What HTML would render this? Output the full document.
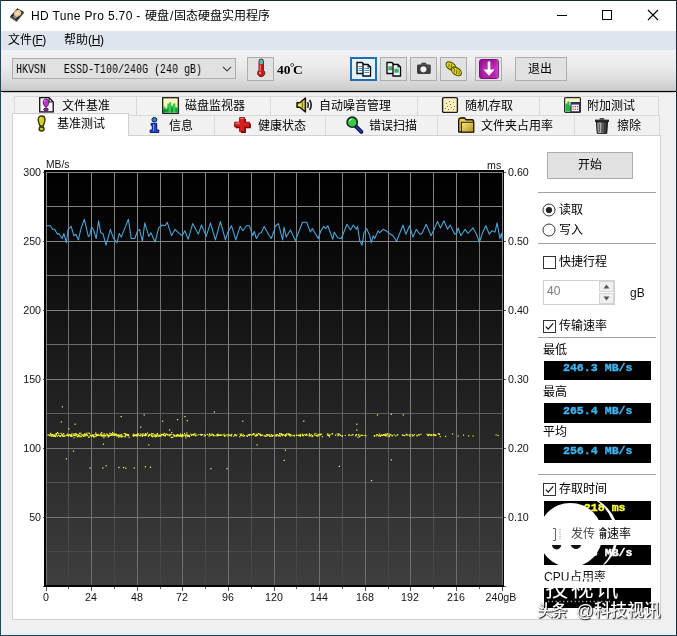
<!DOCTYPE html>
<html lang="zh-CN"><head><meta charset="utf-8"><title>HD Tune Pro 5.70</title>
<style>
html,body{margin:0;padding:0;background:#f0f0f0}
#w{position:relative;width:677px;height:636px;overflow:hidden;font-family:"Liberation Sans",sans-serif}
.b,.c,.t,.i{position:absolute;display:block}
.b{box-sizing:border-box}
.t{white-space:pre;will-change:transform}
.c{overflow:visible}
.i{overflow:visible}
u{text-decoration:underline}
</style></head><body>
<div id="w">
<div class="b" style="left:0px;top:0px;width:677px;height:636px;background:#f0f0f0"></div>
<div class="b" style="left:0px;top:0px;width:677px;height:31px;background:#fff"></div>
<div class="b" style="left:0px;top:31px;width:677px;height:19px;background:#dee5ee"></div>
<div class="b" style="left:0px;top:50px;width:677px;height:41px;background:linear-gradient(#f3f2f6 0%,#ececec 35%,#dedede 70%,#c9c9c9 100%)"></div>
<div class="b" style="left:0px;top:90px;width:677px;height:1px;background:#b4b4b4"></div>
<div class="b" style="left:0px;top:91px;width:677px;height:1px;background:#000"></div>
<div class="b" style="left:0px;top:92px;width:677px;height:1px;background:#c4c4c4"></div>
<svg class="i" style="left:9px;top:7px" width="16" height="16" viewBox="0 0 16 16">
<path d="M1 9.5 L8.3 1.2 L15 5 L7.6 14 Z" fill="#2a2622"/>
<path d="M1 9.5 L7.6 14 L7.6 15 L1 10.6Z" fill="#55504a"/>
<path d="M7.6 14 L15 5 L15 6 L7.6 15Z" fill="#3a3632"/>
<ellipse cx="8.6" cy="6.3" rx="3.9" ry="3.1" transform="rotate(-38 8.6 6.3)" fill="#e8c79a"/>
<ellipse cx="8.6" cy="6.3" rx="1.2" ry="1" transform="rotate(-38 8.6 6.3)" fill="#f7ecd9"/>
<path d="M3.5 9.8 L6.8 12 L8 10.5 L5 8.3Z" fill="#8d8a86"/>
</svg>
<span class="t" style="left:30.5px;top:10.1px;font:normal 12px/1 'Liberation Sans', sans-serif;color:#000;letter-spacing:0.35px;">HD Tune Pro 5.70 - </span>
<span class="t" style="left:144.7px;top:10.3px;font:normal 12px/1 'Liberation Sans','Noto Sans CJK SC',sans-serif;color:#000;">硬盘</span>
<span class="t" style="left:169.6px;top:10.1px;font:normal 12px/1 'Liberation Sans', sans-serif;color:#000;letter-spacing:0px;">/</span>
<span class="t" style="left:174.2px;top:10.3px;font:normal 12px/1 'Liberation Sans','Noto Sans CJK SC',sans-serif;color:#000;">固态硬盘实用程序</span>
<div class="b" style="left:557px;top:15px;width:10px;height:1px;background:#000"></div>
<div class="b" style="left:602px;top:10px;width:10px;height:10px;border:1px solid #000"></div>
<svg class="i" style="left:647px;top:9px" width="12" height="12" viewBox="0 0 12 12"><path d="M1 1L11 11M11 1L1 11" stroke="#000" stroke-width="1.1" fill="none"/></svg>
<span class="t" style="left:7.7px;top:33.6px;font:normal 12px/1 'Liberation Sans','Noto Sans CJK SC',sans-serif;color:#000;">文件</span>
<span class="t" style="left:32px;top:34.1px;font:normal 12px/1 'Liberation Sans', sans-serif;color:#000;letter-spacing:-0.5px;">(<u>F</u>)</span>
<span class="t" style="left:63.9px;top:33.6px;font:normal 12px/1 'Liberation Sans','Noto Sans CJK SC',sans-serif;color:#000;">帮助</span>
<span class="t" style="left:88.3px;top:34.1px;font:normal 12px/1 'Liberation Sans', sans-serif;color:#000;letter-spacing:-0.3px;">(<u>H</u>)</span>
<div class="b" style="left:12px;top:58px;width:224px;height:21px;background:#e1e1e1;border:1px solid #adadad"></div>
<span class="t" style="left:16px;top:63.5px;font:12px/1 'Liberation Mono',monospace;color:#000;transform-origin:0 0;transform:scaleX(.8333)">HKVSN   ESSD-T100/240G (240 gB)</span>
<svg class="i" style="left:222px;top:65px" width="10" height="8" viewBox="0 0 10 8"><path d="M1 1.8 L5 5.8 L9 1.8" stroke="#444" stroke-width="1.2" fill="none"/></svg>
<div class="b" style="left:247px;top:57px;width:27px;height:24px;background:#e1e1e1;border:1px solid #adadad"></div>
<svg class="i" style="left:254px;top:59px" width="14" height="20" viewBox="0 0 14 20">
<path d="M5 2.2 a2.2 2.2 0 0 1 4.4 0 V11.2 a3.6 3.6 0 1 1 -4.4 0Z" fill="#c8191c" stroke="#6d0d10" stroke-width=".9"/>
<path d="M5.45 2.2 a1.75 1.75 0 0 1 3.5 0 V5 H5.45Z" fill="#3fc4c4"/>
<path d="M6.2 5.5 V12.2" stroke="#ff8a8a" stroke-width="1"/>
<circle cx="6" cy="14" r="1" fill="#ffb0b0"/>
</svg>
<span class="t" style="left:277px;top:62.5px;font:bold 13.5px/1 'Liberation Serif', serif;color:#000;letter-spacing:0px;">40</span>
<span class="t" style="left:289.8px;top:61.5px;font:bold 11px/1 'Liberation Serif', serif;color:#000;letter-spacing:0px;">°</span>
<span class="t" style="left:293.2px;top:62.5px;font:bold 13.5px/1 'Liberation Serif', serif;color:#000;letter-spacing:0px;">C</span>
<div class="b" style="left:350px;top:57px;width:27px;height:24px;background:#e5f1fb;border:2px solid #1b6fb2"></div>
<div class="b" style="left:380px;top:57px;width:27px;height:24px;background:#e1e1e1;border:1px solid #adadad"></div>
<div class="b" style="left:410px;top:57px;width:27px;height:24px;background:#e1e1e1;border:1px solid #adadad"></div>
<div class="b" style="left:440px;top:57px;width:27px;height:24px;background:#e1e1e1;border:1px solid #adadad"></div>
<div class="b" style="left:475px;top:57px;width:27px;height:24px;background:#e1e1e1;border:1px solid #adadad"></div>
<div class="b" style="left:515px;top:57px;width:52px;height:24px;background:#e1e1e1;border:1px solid #adadad"></div>
<span class="t" style="left:528.4px;top:63px;font:normal 12px/1 'Liberation Sans','Noto Sans CJK SC',sans-serif;color:#000;">退出</span>
<svg class="i" style="left:356px;top:60.5px" width="16" height="16" viewBox="0 0 16 16">
<path d="M1 1.5H6L8 3.5V12.5H1Z" fill="#fff" stroke="#0a0a0a" stroke-width="1.35"/><path d="M2.5 5.5H6M2.5 7.5H6M2.5 9.5H6" stroke="#2f8fd0" stroke-width="1"/>
<path d="M7 3.5H12L14.5 6V15H7Z" fill="#fff" stroke="#0a0a0a" stroke-width="1.35"/>
<path d="M12 3.5V6H14.5" fill="none" stroke="#0a0a0a" stroke-width="1.1"/><path d="M8.5 7.5H13M8.5 9.5H13M8.5 11.5H13" stroke="#2f8fd0" stroke-width="1"/>
</svg>
<svg class="i" style="left:386px;top:60.5px" width="16" height="16" viewBox="0 0 16 16">
<path d="M1 1.5H6L8 3.5V12.5H1Z" fill="#fff" stroke="#0a0a0a" stroke-width="1.35"/><rect x="2" y="4.5" width="5" height="5.5" fill="#b8dcf6"/><path d="M2.5 5.5h3.5v3.5h-3.5z" fill="#3bb54a"/>
<path d="M7 3.5H12L14.5 6V15H7Z" fill="#fff" stroke="#0a0a0a" stroke-width="1.35"/>
<path d="M12 3.5V6H14.5" fill="none" stroke="#0a0a0a" stroke-width="1.1"/><rect x="8" y="6.5" width="5.5" height="6" fill="#b8dcf6"/><path d="M8.5 8h4v3.5h-4z" fill="#3bb54a"/>
</svg>
<svg class="i" style="left:416px;top:61.6px" width="16" height="13" viewBox="0 0 16 14">
<path d="M4.5 3 L5.5 .8 H10 L11 3Z" fill="#3a3d3f"/>
<rect x=".5" y="2.8" width="14.8" height="10.2" rx="1.6" fill="#3a3d3f"/>
<circle cx="7.4" cy="7.9" r="3.3" fill="#e9e9e9"/>
<circle cx="7.4" cy="7.9" r="1.6" fill="#fff"/>
<rect x="11.8" y="4.5" width="2.2" height="1.5" fill="#4c6a52"/>
</svg>
<svg class="i" style="left:445px;top:60.5px" width="18" height="16" viewBox="0 0 18 16">
<g stroke="#4c4800" stroke-width="1.1" fill="#e2d91c">
<ellipse cx="6" cy="5.2" rx="5.6" ry="3.5" transform="rotate(35 6 5.2)"/>
<ellipse cx="11.4" cy="10.4" rx="5.6" ry="3.5" transform="rotate(35 11.4 10.4)"/>
</g>
<g stroke="#6f6a00" stroke-width="1" fill="none">
<path d="M4.2 2.6 L3.8 6.2M6.6 3.2 L6 8M8.8 5 L8.6 8.2"/>
<path d="M9.6 7.8 L9.2 11.4M12 8.4 L11.4 13.2M14.2 10.2 L14 13.4"/>
</g>
</svg>
<svg class="i" style="left:479px;top:58.5px" width="20" height="20" viewBox="0 0 20 20">
<defs><linearGradient id="pg" x1="0" y1="0" x2="0" y2="1"><stop offset="0" stop-color="#9a1a96"/><stop offset=".45" stop-color="#c228bd"/><stop offset="1" stop-color="#b01fa9"/></linearGradient>
<linearGradient id="pg2" x1="0" y1="0" x2="1" y2="0"><stop offset="0" stop-color="#6e0a6c" stop-opacity=".55"/><stop offset=".25" stop-color="#6e0a6c" stop-opacity="0"/><stop offset=".8" stop-color="#fff" stop-opacity="0"/><stop offset="1" stop-color="#fff" stop-opacity=".2"/></linearGradient></defs>
<rect x=".5" y=".5" width="19" height="19" rx="2.2" fill="url(#pg)" stroke="#7a1278" stroke-width="1"/>
<rect x=".5" y=".5" width="19" height="19" rx="2.2" fill="url(#pg2)"/>
<path d="M8.7 2.6 H11.3 V10.6 H15.6 L10 16.8 L4.4 10.6 H8.7Z" fill="#fff"/>
</svg>
<div class="b" style="left:14px;top:95.5px;width:123px;height:20px;background:#f2f2f2;border:1px solid #d9d9d9"></div>
<div class="b" style="left:136px;top:95.5px;width:135px;height:20px;background:#f2f2f2;border:1px solid #d9d9d9"></div>
<div class="b" style="left:270px;top:95.5px;width:147.5px;height:20px;background:#f2f2f2;border:1px solid #d9d9d9"></div>
<div class="b" style="left:416.5px;top:95.5px;width:123px;height:20px;background:#f2f2f2;border:1px solid #d9d9d9"></div>
<div class="b" style="left:538.5px;top:95.5px;width:120.5px;height:20px;background:#f2f2f2;border:1px solid #d9d9d9"></div>
<div class="b" style="left:128px;top:115px;width:86.5px;height:21px;background:#f1f1f1;border:1px solid #d9d9d9"></div>
<div class="b" style="left:213.5px;top:115px;width:112.5px;height:21px;background:#f1f1f1;border:1px solid #d9d9d9"></div>
<div class="b" style="left:325px;top:115px;width:113px;height:21px;background:#f1f1f1;border:1px solid #d9d9d9"></div>
<div class="b" style="left:437px;top:115px;width:137.5px;height:21px;background:#f1f1f1;border:1px solid #d9d9d9"></div>
<div class="b" style="left:573.5px;top:115px;width:86px;height:21px;background:#f1f1f1;border:1px solid #d9d9d9"></div>
<div class="b" style="left:12px;top:135px;width:648.7px;height:485px;background:#fff;border:1px solid #d0d0d0"></div>
<div class="b" style="left:12px;top:113px;width:116.5px;height:23px;background:#fff;border:1px solid #d0d0d0;border-bottom:none"></div>
<svg class="i" style="left:39px;top:97px" width="16" height="16" viewBox="0 0 16 16">
<path d="M1.6 1.6H10.8L15 5.8V15.6H1.6Z" fill="#8a8a8a" opacity=".55"/>
<path d="M.7 .7H10L14.2 4.9V14.8H.7Z" fill="#fbf7fb" stroke="#111" stroke-width="1.3" stroke-linejoin="miter"/>
<path d="M10 .7V4.9H14.2" fill="none" stroke="#111" stroke-width="1"/>
<path d="M7 1.9 C9.4 1.9 10 4.2 9.7 6 C9.4 8 8.2 9.6 7 10.6 C5.8 9.6 4.6 8 4.3 6 C4 4.2 4.6 1.9 7 1.9Z" fill="#c332cc" stroke="#4a0a52" stroke-width=".9"/>
<path d="M5.6 4.8 C5.5 3.6 6.1 3 6.9 2.9" stroke="#f0a8f4" stroke-width=".9" fill="none"/>
<ellipse cx="7" cy="12.5" rx="2.3" ry="1.25" fill="#a826b0" stroke="#3a0640" stroke-width=".9"/>
</svg>
<span class="t" style="left:61.5px;top:100.3px;font:normal 12px/1 'Liberation Sans','Noto Sans CJK SC',sans-serif;color:#000;">文件基准</span>
<svg class="i" style="left:162px;top:96.5px" width="18" height="18" viewBox="0 0 18 18">
<rect x="1.4" y="1.4" width="15.8" height="15.8" fill="#777" opacity=".55"/>
<rect x=".7" y=".7" width="15.6" height="15.6" fill="#fbfbbe" stroke="#1c1c1c" stroke-width="1.3"/>
<path d="M1.4 15.6V9.4H3.4V11.4H5.4V6.4H7.4V4.9H9V8.4H11V6.4H13.4V9.9H15.6V15.6Z" fill="#35c94e"/>
<path d="M1.4 15.6V11.4H3.4V12.6H5.4V9.4H6.4V15.6ZM9 15.6V10.4H11V15.6ZM13.4 15.6V11.4H15.6V15.6Z" fill="#14963a"/>
<path d="M1.4 15.6V12.4H2.4V15.6Z" fill="#0e6a2a"/>
</svg>
<span class="t" style="left:184.7px;top:100.3px;font:normal 12px/1 'Liberation Sans','Noto Sans CJK SC',sans-serif;color:#000;">磁盘监视器</span>
<svg class="i" style="left:295.5px;top:96.5px" width="18" height="16" viewBox="0 0 18 16">
<path d="M1 5.8H3.8L9.4 1V15L3.8 10.2H1Z" fill="#dcd638" stroke="#161606" stroke-width="1.5" stroke-linejoin="round"/>
<path d="M6.4 4.2V11.8" stroke="#77741c" stroke-width="1.1"/>
<path d="M4 6.4V9.6" stroke="#f8f6a8" stroke-width="1"/>
<path d="M11.6 5.2 Q13 8 11.6 10.8" stroke="#1a1a1a" stroke-width="1.5" fill="none"/>
<path d="M13.6 3 Q16.8 8 13.6 13" stroke="#1a1a1a" stroke-width="1.6" fill="none"/>
</svg>
<span class="t" style="left:319.3px;top:100.3px;font:normal 12px/1 'Liberation Sans','Noto Sans CJK SC',sans-serif;color:#000;">自动噪音管理</span>
<svg class="i" style="left:442px;top:97px" width="16" height="16" viewBox="0 0 16 16">
<rect x=".6" y=".6" width="14.8" height="14.8" rx="1.2" fill="#fdf3c0" stroke="#1c1c1c" stroke-width="1.4"/>
<g fill="#d6542a"><rect x="3" y="11" width="1" height="1"/><rect x="5" y="9" width="1" height="1"/><rect x="6" y="12" width="1" height="1"/><rect x="8" y="7" width="1" height="1"/><rect x="9" y="10" width="1" height="1"/><rect x="11" y="5" width="1" height="1"/><rect x="12" y="9" width="1" height="1"/><rect x="11" y="12" width="1" height="1"/><rect x="4" y="6" width="1" height="1"/><rect x="7" y="4" width="1" height="1"/></g>
</svg>
<span class="t" style="left:464.7px;top:100.3px;font:normal 12px/1 'Liberation Sans','Noto Sans CJK SC',sans-serif;color:#000;">随机存取</span>
<svg class="i" style="left:563.5px;top:97px" width="17" height="16" viewBox="0 0 17 16">
<rect x=".6" y=".6" width="15.8" height="14.8" rx="1" fill="#fbf6c2" stroke="#2a2a2a" stroke-width="1.2"/>
<path d="M1.4 14.6V6.4H3.4V4.4H5.4V8.4H7V14.6Z" fill="#25b24a"/>
<rect x="7" y="5.6" width="8.6" height="9.2" fill="#f4f4ff" stroke="#223" stroke-width="1"/>
<rect x="7" y="5.6" width="8.6" height="2" fill="#26356e"/>
<g fill="#c0392b"><rect x="8.6" y="9" width="1.2" height="1.2"/><rect x="10.8" y="9" width="1.2" height="1.2"/><rect x="13" y="9" width="1.2" height="1.2"/><rect x="8.6" y="11.6" width="1.2" height="1.2"/><rect x="10.8" y="11.6" width="1.2" height="1.2"/><rect x="13" y="11.6" width="1.2" height="1.2"/></g>
</svg>
<span class="t" style="left:587px;top:100.3px;font:normal 12px/1 'Liberation Sans','Noto Sans CJK SC',sans-serif;color:#000;">附加测试</span>
<svg class="i" style="left:37px;top:114.6px" width="10" height="17" viewBox="0 0 10 17">
<path d="M1.2 4.6 C1.2 2.2 2.8 1 4.6 1 C6.4 1 8 2.2 8 4.6 C8 6.8 6.8 9 6.3 11 H2.9 C2.4 9 1.2 6.8 1.2 4.6Z" fill="#d4d022" stroke="#34330a" stroke-width="1.35"/>
<path d="M2.9 4.4 C2.9 3.2 3.6 2.5 4.4 2.4" stroke="#f6f4a0" stroke-width="1" fill="none"/>
<ellipse cx="4.6" cy="14" rx="2.5" ry="2" fill="#c9c51e" stroke="#34330a" stroke-width="1.35"/>
</svg>
<span class="t" style="left:57px;top:118.2px;font:normal 12px/1 'Liberation Sans','Noto Sans CJK SC',sans-serif;color:#000;">基准测试</span>
<svg class="i" style="left:148.5px;top:117px" width="11" height="16" viewBox="0 0 11 16">
<ellipse cx="5.4" cy="2.7" rx="2.5" ry="2.2" fill="#2c86cc" stroke="#0a1a50" stroke-width="1"/>
<path d="M2.2 6.3H7.7V13H9.8V15.4H1.2V13H3.3V8.6H2.2Z" fill="#2346dc" stroke="#0a1456" stroke-width="1" stroke-linejoin="round"/>
<path d="M4.5 7.4V14.2" stroke="#6f9cff" stroke-width="1"/>
</svg>
<span class="t" style="left:169.2px;top:120.2px;font:normal 12px/1 'Liberation Sans','Noto Sans CJK SC',sans-serif;color:#000;">信息</span>
<svg class="i" style="left:233.5px;top:117px" width="17" height="16" viewBox="0 0 17 16">
<path d="M6 1H11V5.6H16V10.4H11V15H6V10.4H1V5.6H6Z" fill="#5e0909" transform="translate(.9 .9)"/>
<path d="M5.6 .6H10.6V5.2H15.6V10H10.6V14.6H5.6V10H.6V5.2H5.6Z" fill="#d81f1f" stroke="#8a0e0e" stroke-width=".9"/>
<path d="M6.4 1.6H9.4M1.6 6.2H5.8" stroke="#ff8b8b" stroke-width="1"/>
</svg>
<span class="t" style="left:257.5px;top:120.2px;font:normal 12px/1 'Liberation Sans','Noto Sans CJK SC',sans-serif;color:#000;">健康状态</span>
<svg class="i" style="left:346px;top:116px" width="18" height="18" viewBox="0 0 18 18">
<path d="M9.4 9.8 L15.4 15.8" stroke="#0c1248" stroke-width="4" stroke-linecap="round"/>
<path d="M10 10.4 L15.2 15.6" stroke="#2a36b8" stroke-width="1.7" stroke-linecap="round"/>
<circle cx="6.2" cy="6.2" r="5.1" fill="#3ccb48" stroke="#0e2e14" stroke-width="1.6"/>
<path d="M3.2 5.4 a3.2 3.2 0 0 1 3 -2.4" stroke="#c9ffd0" stroke-width="1.1" fill="none"/>
</svg>
<span class="t" style="left:368.7px;top:120.2px;font:normal 12px/1 'Liberation Sans','Noto Sans CJK SC',sans-serif;color:#000;">错误扫描</span>
<svg class="i" style="left:458px;top:117px" width="17" height="16" viewBox="0 0 17 16">
<defs><linearGradient id="fg" x1="0" y1="0" x2="1" y2="1"><stop offset="0" stop-color="#fbea8c"/><stop offset="1" stop-color="#b98f12"/></linearGradient></defs>
<path d="M.7 3.2 Q.7 1.2 2.6 1 L6.2 .7 L8.2 2.8 H14 Q15.6 2.8 15.6 4.4 V15 H.7Z" fill="#e9cf5a" stroke="#1a1503" stroke-width="1.4" stroke-linejoin="round"/>
<path d="M3.4 5.2 H15.6 V15 H3.4Z" fill="url(#fg)" stroke="#2a2205" stroke-width="1.1"/>
</svg>
<span class="t" style="left:481.2px;top:120.2px;font:normal 12px/1 'Liberation Sans','Noto Sans CJK SC',sans-serif;color:#000;">文件夹占用率</span>
<svg class="i" style="left:593.5px;top:116.5px" width="16" height="17" viewBox="0 0 16 17">
<defs><linearGradient id="tg" x1="0" y1="0" x2="1" y2="0"><stop offset="0" stop-color="#5b5b5b"/><stop offset=".3" stop-color="#c9c9c9"/><stop offset=".55" stop-color="#6a6a6a"/><stop offset="1" stop-color="#1c1c1c"/></linearGradient></defs>
<path d="M5.6 1.2H10.2V2.6H5.6Z" fill="#222"/>
<path d="M1 2.6H15V5H1Z" fill="#2b2b2b"/>
<path d="M2.4 5H13.6L12.8 16.4H3.2Z" fill="url(#tg)" stroke="#111" stroke-width=".9"/>
<path d="M5.4 6.4V15M8 6.4V15M10.6 6.4V15" stroke="#222" stroke-width=".9" opacity=".7"/>
</svg>
<span class="t" style="left:617.3px;top:120.2px;font:normal 12px/1 'Liberation Sans','Noto Sans CJK SC',sans-serif;color:#000;">擦除</span>
<svg class="i" style="left:0;top:0" width="677" height="636" viewBox="0 0 677 636"><defs><linearGradient id="cg" x1="0" y1="0" x2="0" y2="1"><stop offset="0" stop-color="#000"/><stop offset=".12" stop-color="#050505"/><stop offset="1" stop-color="#3f3f3f"/></linearGradient></defs><rect x="44" y="170" width="460" height="417" fill="#000"/><rect x="46" y="172" width="457" height="413" fill="url(#cg)"/><linearGradient id="mg" gradientUnits="userSpaceOnUse" x1="0" y1="172" x2="0" y2="585"><stop offset="0" stop-color="#868686"/><stop offset="1" stop-color="#444444"/></linearGradient><linearGradient id="Mg" gradientUnits="userSpaceOnUse" x1="0" y1="172" x2="0" y2="585"><stop offset="0" stop-color="#8a8a8a"/><stop offset="1" stop-color="#6e6e6e"/></linearGradient><path d="M68.5 172V585M114.5 172V585M160.5 172V585M205.5 172V585M251.5 172V585M296.5 172V585M342.5 172V585M388.5 172V585M433.5 172V585M479.5 172V585" stroke="url(#mg)" stroke-width="1" fill="none" shape-rendering="crispEdges"/><path d="M46 172.5H503" stroke="#8a8a8a" stroke-width="1" fill="none" shape-rendering="crispEdges"/><path d="M46 206.5H503" stroke="#818181" stroke-width="1" fill="none" shape-rendering="crispEdges"/><path d="M46 241.5H503" stroke="#858585" stroke-width="1" fill="none" shape-rendering="crispEdges"/><path d="M46 275.5H503" stroke="#767676" stroke-width="1" fill="none" shape-rendering="crispEdges"/><path d="M46 310.5H503" stroke="#818181" stroke-width="1" fill="none" shape-rendering="crispEdges"/><path d="M46 344.5H503" stroke="#6b6b6b" stroke-width="1" fill="none" shape-rendering="crispEdges"/><path d="M46 379.5H503" stroke="#7c7c7c" stroke-width="1" fill="none" shape-rendering="crispEdges"/><path d="M46 413.5H503" stroke="#5f5f5f" stroke-width="1" fill="none" shape-rendering="crispEdges"/><path d="M46 448.5H503" stroke="#777777" stroke-width="1" fill="none" shape-rendering="crispEdges"/><path d="M46 482.5H503" stroke="#545454" stroke-width="1" fill="none" shape-rendering="crispEdges"/><path d="M46 517.5H503" stroke="#737373" stroke-width="1" fill="none" shape-rendering="crispEdges"/><path d="M46 551.5H503" stroke="#494949" stroke-width="1" fill="none" shape-rendering="crispEdges"/><path d="M46.5 172V585M91.5 172V585M137.5 172V585M182.5 172V585M228.5 172V585M274.5 172V585M319.5 172V585M365.5 172V585M410.5 172V585M456.5 172V585M502.5 172V585" stroke="url(#Mg)" stroke-width="1" fill="none" shape-rendering="crispEdges"/><path d="M42.5 172.5H44M504 172.5H505.5M42.5 241.5H44M504 241.5H505.5M42.5 310.5H44M504 310.5H505.5M42.5 379.5H44M504 379.5H505.5M42.5 448.5H44M504 448.5H505.5M42.5 517.5H44M504 517.5H505.5M42.5 586.5H44M504 586.5H505.5M46.5 587V590.5M68.5 587V588.5M91.5 587V590.5M114.5 587V588.5M137.5 587V590.5M160.5 587V588.5M182.5 587V590.5M205.5 587V588.5M228.5 587V590.5M251.5 587V588.5M274.5 587V590.5M296.5 587V588.5M319.5 587V590.5M342.5 587V588.5M365.5 587V590.5M388.5 587V588.5M410.5 587V590.5M433.5 587V588.5M456.5 587V590.5M479.5 587V588.5M502.5 587V590.5" stroke="#555" stroke-width="1" fill="none" shape-rendering="crispEdges"/><polyline points="46.5,225.7 50.4,225.7 52.5,229.3 54.6,229.3 57.5,234.2 58.9,233.5 62.2,238.5 63.9,233.5 66.4,242.7 68.1,229.3 71.2,226.4 73.8,235.7 75.9,234.2 78.3,239.9 81.2,227.9 84.4,219.3 88.3,236.4 89.7,235.7 91.5,227.1 93.6,230 96.2,238.5 98.6,220.8 100.7,232.8 102.9,233.5 106,245.2 110.4,229.3 113.5,238.5 117,242.7 119.2,233.5 121.3,237.1 124.9,227.9 128.4,219.3 131.2,238.5 134.8,238.5 137.6,230.7 139.5,229.3 142.4,241.3 144.8,222.9 148.8,236.4 150.9,232.8 155.1,242 158.7,227.9 162.2,225 165.1,225.7 167.2,222.2 171.5,235.7 175,229.3 178.6,232.8 182.1,235.7 184.9,230.7 188.2,239.2 192.7,223.6 198.4,234.2 201.5,225 206.2,236.4 210.5,222.9 215.4,239.9 220.4,221.5 225.4,239.9 228.2,231.4 231.5,225.7 235.8,239.9 240.1,226.4 242.9,230.7 246.4,225.7 249.3,225.7 252.8,235.7 254.2,231.4 256.4,238.5 259.2,233.5 261.3,232.8 264.2,226.4 268.4,234.2 271.3,238.5 274.1,230.7 275.5,225.7 278.4,223.6 282.6,239.9 284,227.1 286.2,237.1 290.4,230 295.4,240.6 302.5,222.2 306.7,222.2 310.3,232.1 312.4,228.6 318.1,238.5 320.9,230.7 323.5,226.4 325.7,228.6 327.8,225.7 332.8,239.2 334.2,232.1 337.7,237.8 341.3,238.5 347,224.3 350.5,230 353.3,225 356.2,229.3 357.6,226.4 359.7,240.6 362.1,245.2 364,232.8 366.5,228.6 369.6,235 371.3,242.7 373.2,235.7 374.6,238.5 378.2,230.7 379.6,232.8 383.1,229.3 386,230.7 389.5,233.5 393,235.7 396.6,241.3 403,225 405.8,234.2 409.6,225.7 412.9,237.1 416.3,229.3 419.8,234.2 421.9,233.5 426.2,224.3 431.1,235.7 434.7,227.9 437.5,221.5 440.4,227.9 443.9,220.8 447.5,229.3 450.3,225 454.6,234.2 456.7,233.5 458.1,227.9 460.9,235.7 465.2,229.3 468,233.5 473,227.9 476.5,234.2 479.4,242.7 482.2,233.5 485.8,225.7 489.3,234.2 492.1,230.7 495,232.1 497.1,222.9 499.9,238.5 501.4,233.5 502.4,239.9" fill="none" stroke="#4aaade" stroke-width="1.05" stroke-linejoin="round"/><g fill="#ffff38"><rect x="47.4" y="434.4" width="1.15" height="1.15"/><rect x="48.2" y="434.3" width="1.15" height="1.15"/><rect x="48.9" y="435.0" width="1.15" height="1.15"/><rect x="49.3" y="434.8" width="1.15" height="1.15"/><rect x="49.9" y="432.9" width="1.15" height="1.15"/><rect x="50.2" y="432.9" width="1.15" height="1.15"/><rect x="50.3" y="435.1" width="1.15" height="1.15"/><rect x="50.3" y="434.0" width="1.15" height="1.15"/><rect x="51.5" y="435.2" width="1.15" height="1.15"/><rect x="51.3" y="435.8" width="1.15" height="1.15"/><rect x="51.0" y="434.3" width="1.15" height="1.15"/><rect x="52.1" y="434.5" width="1.15" height="1.15"/><rect x="52.2" y="434.1" width="1.15" height="1.15"/><rect x="53.2" y="435.8" width="1.15" height="1.15"/><rect x="53.0" y="434.6" width="1.15" height="1.15"/><rect x="53.3" y="435.9" width="1.15" height="1.15"/><rect x="53.7" y="435.1" width="1.15" height="1.15"/><rect x="54.0" y="434.5" width="1.15" height="1.15"/><rect x="54.8" y="436.0" width="1.15" height="1.15"/><rect x="54.7" y="435.0" width="1.15" height="1.15"/><rect x="55.5" y="434.1" width="1.15" height="1.15"/><rect x="55.4" y="433.3" width="1.15" height="1.15"/><rect x="55.8" y="433.1" width="1.15" height="1.15"/><rect x="56.4" y="434.8" width="1.15" height="1.15"/><rect x="56.5" y="432.7" width="1.15" height="1.15"/><rect x="57.1" y="432.1" width="1.15" height="1.15"/><rect x="56.7" y="435.7" width="1.15" height="1.15"/><rect x="58.0" y="434.8" width="1.15" height="1.15"/><rect x="58.3" y="433.0" width="1.15" height="1.15"/><rect x="59.7" y="435.9" width="1.15" height="1.15"/><rect x="59.2" y="435.4" width="1.15" height="1.15"/><rect x="60.5" y="432.8" width="1.15" height="1.15"/><rect x="59.9" y="435.2" width="1.15" height="1.15"/><rect x="61.0" y="434.4" width="1.15" height="1.15"/><rect x="61.7" y="435.6" width="1.15" height="1.15"/><rect x="61.9" y="434.6" width="1.15" height="1.15"/><rect x="62.7" y="433.2" width="1.15" height="1.15"/><rect x="62.2" y="434.5" width="1.15" height="1.15"/><rect x="63.3" y="435.9" width="1.15" height="1.15"/><rect x="63.3" y="433.3" width="1.15" height="1.15"/><rect x="63.0" y="435.7" width="1.15" height="1.15"/><rect x="63.9" y="435.5" width="1.15" height="1.15"/><rect x="64.7" y="435.2" width="1.15" height="1.15"/><rect x="66.1" y="434.6" width="1.15" height="1.15"/><rect x="66.5" y="434.6" width="1.15" height="1.15"/><rect x="67.8" y="435.5" width="1.15" height="1.15"/><rect x="67.1" y="433.5" width="1.15" height="1.15"/><rect x="67.1" y="434.8" width="1.15" height="1.15"/><rect x="67.8" y="434.9" width="1.15" height="1.15"/><rect x="68.6" y="434.1" width="1.15" height="1.15"/><rect x="69.0" y="434.4" width="1.15" height="1.15"/><rect x="70.0" y="434.5" width="1.15" height="1.15"/><rect x="69.5" y="434.5" width="1.15" height="1.15"/><rect x="70.0" y="435.6" width="1.15" height="1.15"/><rect x="70.8" y="434.3" width="1.15" height="1.15"/><rect x="71.0" y="435.2" width="1.15" height="1.15"/><rect x="70.9" y="435.7" width="1.15" height="1.15"/><rect x="71.4" y="433.2" width="1.15" height="1.15"/><rect x="72.0" y="435.4" width="1.15" height="1.15"/><rect x="73.0" y="434.7" width="1.15" height="1.15"/><rect x="73.4" y="437.3" width="1.15" height="1.15"/><rect x="72.9" y="433.5" width="1.15" height="1.15"/><rect x="73.9" y="434.8" width="1.15" height="1.15"/><rect x="74.6" y="435.2" width="1.15" height="1.15"/><rect x="74.3" y="433.6" width="1.15" height="1.15"/><rect x="74.7" y="433.1" width="1.15" height="1.15"/><rect x="75.1" y="434.6" width="1.15" height="1.15"/><rect x="75.6" y="433.5" width="1.15" height="1.15"/><rect x="75.8" y="433.7" width="1.15" height="1.15"/><rect x="76.6" y="436.2" width="1.15" height="1.15"/><rect x="75.9" y="434.5" width="1.15" height="1.15"/><rect x="77.2" y="434.0" width="1.15" height="1.15"/><rect x="77.4" y="435.7" width="1.15" height="1.15"/><rect x="77.1" y="436.1" width="1.15" height="1.15"/><rect x="78.2" y="434.7" width="1.15" height="1.15"/><rect x="77.9" y="434.7" width="1.15" height="1.15"/><rect x="78.9" y="432.7" width="1.15" height="1.15"/><rect x="78.4" y="435.4" width="1.15" height="1.15"/><rect x="78.4" y="434.6" width="1.15" height="1.15"/><rect x="79.3" y="435.4" width="1.15" height="1.15"/><rect x="79.3" y="436.1" width="1.15" height="1.15"/><rect x="80.5" y="436.2" width="1.15" height="1.15"/><rect x="80.2" y="432.6" width="1.15" height="1.15"/><rect x="80.6" y="435.7" width="1.15" height="1.15"/><rect x="80.6" y="434.0" width="1.15" height="1.15"/><rect x="81.8" y="434.8" width="1.15" height="1.15"/><rect x="82.6" y="434.0" width="1.15" height="1.15"/><rect x="82.8" y="435.7" width="1.15" height="1.15"/><rect x="83.6" y="434.6" width="1.15" height="1.15"/><rect x="83.4" y="435.4" width="1.15" height="1.15"/><rect x="84.3" y="435.5" width="1.15" height="1.15"/><rect x="84.2" y="434.0" width="1.15" height="1.15"/><rect x="84.2" y="433.1" width="1.15" height="1.15"/><rect x="85.4" y="434.5" width="1.15" height="1.15"/><rect x="85.4" y="434.0" width="1.15" height="1.15"/><rect x="86.2" y="432.7" width="1.15" height="1.15"/><rect x="85.5" y="434.9" width="1.15" height="1.15"/><rect x="86.4" y="434.1" width="1.15" height="1.15"/><rect x="87.1" y="435.1" width="1.15" height="1.15"/><rect x="87.6" y="432.5" width="1.15" height="1.15"/><rect x="88.0" y="436.5" width="1.15" height="1.15"/><rect x="89.0" y="432.8" width="1.15" height="1.15"/><rect x="88.7" y="436.5" width="1.15" height="1.15"/><rect x="89.7" y="434.5" width="1.15" height="1.15"/><rect x="90.0" y="434.9" width="1.15" height="1.15"/><rect x="90.6" y="435.4" width="1.15" height="1.15"/><rect x="90.7" y="435.5" width="1.15" height="1.15"/><rect x="91.8" y="434.7" width="1.15" height="1.15"/><rect x="91.8" y="435.2" width="1.15" height="1.15"/><rect x="92.4" y="435.1" width="1.15" height="1.15"/><rect x="92.1" y="434.5" width="1.15" height="1.15"/><rect x="92.8" y="435.1" width="1.15" height="1.15"/><rect x="93.1" y="435.9" width="1.15" height="1.15"/><rect x="93.2" y="436.4" width="1.15" height="1.15"/><rect x="93.5" y="434.2" width="1.15" height="1.15"/><rect x="94.8" y="433.6" width="1.15" height="1.15"/><rect x="94.3" y="436.3" width="1.15" height="1.15"/><rect x="95.3" y="435.6" width="1.15" height="1.15"/><rect x="95.2" y="432.4" width="1.15" height="1.15"/><rect x="96.0" y="433.9" width="1.15" height="1.15"/><rect x="95.8" y="435.1" width="1.15" height="1.15"/><rect x="96.8" y="435.0" width="1.15" height="1.15"/><rect x="97.0" y="434.6" width="1.15" height="1.15"/><rect x="97.4" y="433.8" width="1.15" height="1.15"/><rect x="98.0" y="434.6" width="1.15" height="1.15"/><rect x="98.6" y="434.8" width="1.15" height="1.15"/><rect x="99.4" y="435.0" width="1.15" height="1.15"/><rect x="100.2" y="433.6" width="1.15" height="1.15"/><rect x="100.1" y="433.5" width="1.15" height="1.15"/><rect x="101.1" y="432.0" width="1.15" height="1.15"/><rect x="100.6" y="433.8" width="1.15" height="1.15"/><rect x="100.7" y="435.1" width="1.15" height="1.15"/><rect x="101.5" y="434.6" width="1.15" height="1.15"/><rect x="102.1" y="435.2" width="1.15" height="1.15"/><rect x="101.6" y="435.6" width="1.15" height="1.15"/><rect x="102.6" y="433.5" width="1.15" height="1.15"/><rect x="102.4" y="435.2" width="1.15" height="1.15"/><rect x="103.4" y="435.5" width="1.15" height="1.15"/><rect x="103.2" y="434.7" width="1.15" height="1.15"/><rect x="103.3" y="437.2" width="1.15" height="1.15"/><rect x="104.0" y="433.4" width="1.15" height="1.15"/><rect x="104.2" y="434.8" width="1.15" height="1.15"/><rect x="104.6" y="435.5" width="1.15" height="1.15"/><rect x="104.6" y="435.1" width="1.15" height="1.15"/><rect x="106.0" y="433.5" width="1.15" height="1.15"/><rect x="106.9" y="434.0" width="1.15" height="1.15"/><rect x="107.0" y="433.9" width="1.15" height="1.15"/><rect x="106.3" y="435.2" width="1.15" height="1.15"/><rect x="107.7" y="436.4" width="1.15" height="1.15"/><rect x="107.5" y="435.1" width="1.15" height="1.15"/><rect x="108.2" y="435.4" width="1.15" height="1.15"/><rect x="108.5" y="435.5" width="1.15" height="1.15"/><rect x="108.3" y="435.2" width="1.15" height="1.15"/><rect x="109.2" y="432.8" width="1.15" height="1.15"/><rect x="108.7" y="434.6" width="1.15" height="1.15"/><rect x="110.1" y="434.8" width="1.15" height="1.15"/><rect x="110.6" y="433.5" width="1.15" height="1.15"/><rect x="110.2" y="433.5" width="1.15" height="1.15"/><rect x="111.5" y="433.4" width="1.15" height="1.15"/><rect x="111.1" y="434.6" width="1.15" height="1.15"/><rect x="111.1" y="434.5" width="1.15" height="1.15"/><rect x="112.0" y="433.8" width="1.15" height="1.15"/><rect x="112.2" y="434.4" width="1.15" height="1.15"/><rect x="112.1" y="431.9" width="1.15" height="1.15"/><rect x="113.1" y="434.7" width="1.15" height="1.15"/><rect x="112.7" y="433.2" width="1.15" height="1.15"/><rect x="113.9" y="434.6" width="1.15" height="1.15"/><rect x="113.4" y="433.7" width="1.15" height="1.15"/><rect x="114.7" y="433.9" width="1.15" height="1.15"/><rect x="114.4" y="433.2" width="1.15" height="1.15"/><rect x="115.7" y="434.1" width="1.15" height="1.15"/><rect x="115.2" y="434.7" width="1.15" height="1.15"/><rect x="116.5" y="435.7" width="1.15" height="1.15"/><rect x="116.6" y="434.7" width="1.15" height="1.15"/><rect x="116.0" y="433.8" width="1.15" height="1.15"/><rect x="117.1" y="434.8" width="1.15" height="1.15"/><rect x="118.1" y="435.1" width="1.15" height="1.15"/><rect x="117.8" y="434.4" width="1.15" height="1.15"/><rect x="118.6" y="434.8" width="1.15" height="1.15"/><rect x="118.2" y="436.7" width="1.15" height="1.15"/><rect x="118.6" y="435.8" width="1.15" height="1.15"/><rect x="119.3" y="434.6" width="1.15" height="1.15"/><rect x="120.5" y="436.3" width="1.15" height="1.15"/><rect x="119.9" y="434.6" width="1.15" height="1.15"/><rect x="120.5" y="436.0" width="1.15" height="1.15"/><rect x="120.9" y="433.9" width="1.15" height="1.15"/><rect x="120.9" y="435.9" width="1.15" height="1.15"/><rect x="121.4" y="434.6" width="1.15" height="1.15"/><rect x="121.6" y="436.1" width="1.15" height="1.15"/><rect x="122.4" y="435.7" width="1.15" height="1.15"/><rect x="123.7" y="432.9" width="1.15" height="1.15"/><rect x="124.5" y="436.4" width="1.15" height="1.15"/><rect x="124.4" y="435.8" width="1.15" height="1.15"/><rect x="125.0" y="434.1" width="1.15" height="1.15"/><rect x="124.8" y="434.6" width="1.15" height="1.15"/><rect x="124.6" y="433.2" width="1.15" height="1.15"/><rect x="125.6" y="433.7" width="1.15" height="1.15"/><rect x="126.4" y="434.8" width="1.15" height="1.15"/><rect x="126.6" y="434.1" width="1.15" height="1.15"/><rect x="126.5" y="433.9" width="1.15" height="1.15"/><rect x="127.4" y="435.2" width="1.15" height="1.15"/><rect x="128.6" y="436.7" width="1.15" height="1.15"/><rect x="128.0" y="434.1" width="1.15" height="1.15"/><rect x="127.9" y="434.8" width="1.15" height="1.15"/><rect x="132.3" y="434.7" width="1.15" height="1.15"/><rect x="132.9" y="435.4" width="1.15" height="1.15"/><rect x="132.9" y="433.6" width="1.15" height="1.15"/><rect x="132.9" y="435.2" width="1.15" height="1.15"/><rect x="133.8" y="435.1" width="1.15" height="1.15"/><rect x="133.9" y="434.5" width="1.15" height="1.15"/><rect x="134.5" y="434.5" width="1.15" height="1.15"/><rect x="135.7" y="435.3" width="1.15" height="1.15"/><rect x="135.0" y="434.7" width="1.15" height="1.15"/><rect x="135.6" y="434.4" width="1.15" height="1.15"/><rect x="136.1" y="434.6" width="1.15" height="1.15"/><rect x="136.5" y="434.6" width="1.15" height="1.15"/><rect x="136.7" y="435.3" width="1.15" height="1.15"/><rect x="136.7" y="434.5" width="1.15" height="1.15"/><rect x="137.4" y="433.1" width="1.15" height="1.15"/><rect x="138.0" y="434.4" width="1.15" height="1.15"/><rect x="137.4" y="433.4" width="1.15" height="1.15"/><rect x="138.9" y="434.9" width="1.15" height="1.15"/><rect x="139.5" y="435.1" width="1.15" height="1.15"/><rect x="139.6" y="435.1" width="1.15" height="1.15"/><rect x="140.1" y="433.3" width="1.15" height="1.15"/><rect x="140.6" y="434.4" width="1.15" height="1.15"/><rect x="141.4" y="434.2" width="1.15" height="1.15"/><rect x="141.8" y="435.7" width="1.15" height="1.15"/><rect x="142.2" y="434.7" width="1.15" height="1.15"/><rect x="142.0" y="435.3" width="1.15" height="1.15"/><rect x="142.5" y="433.1" width="1.15" height="1.15"/><rect x="143.7" y="434.6" width="1.15" height="1.15"/><rect x="143.3" y="434.6" width="1.15" height="1.15"/><rect x="144.0" y="434.9" width="1.15" height="1.15"/><rect x="144.2" y="435.1" width="1.15" height="1.15"/><rect x="144.8" y="433.0" width="1.15" height="1.15"/><rect x="144.8" y="434.9" width="1.15" height="1.15"/><rect x="145.2" y="433.9" width="1.15" height="1.15"/><rect x="145.6" y="434.0" width="1.15" height="1.15"/><rect x="145.7" y="434.6" width="1.15" height="1.15"/><rect x="145.5" y="433.4" width="1.15" height="1.15"/><rect x="147.0" y="432.5" width="1.15" height="1.15"/><rect x="147.7" y="435.5" width="1.15" height="1.15"/><rect x="148.6" y="435.0" width="1.15" height="1.15"/><rect x="147.9" y="435.4" width="1.15" height="1.15"/><rect x="148.5" y="434.2" width="1.15" height="1.15"/><rect x="148.9" y="434.1" width="1.15" height="1.15"/><rect x="149.4" y="433.8" width="1.15" height="1.15"/><rect x="151.0" y="435.1" width="1.15" height="1.15"/><rect x="150.4" y="434.5" width="1.15" height="1.15"/><rect x="151.0" y="435.1" width="1.15" height="1.15"/><rect x="151.4" y="433.6" width="1.15" height="1.15"/><rect x="151.2" y="433.0" width="1.15" height="1.15"/><rect x="151.8" y="436.2" width="1.15" height="1.15"/><rect x="152.4" y="433.1" width="1.15" height="1.15"/><rect x="151.8" y="435.6" width="1.15" height="1.15"/><rect x="153.2" y="435.3" width="1.15" height="1.15"/><rect x="153.6" y="434.2" width="1.15" height="1.15"/><rect x="153.6" y="435.9" width="1.15" height="1.15"/><rect x="154.4" y="434.2" width="1.15" height="1.15"/><rect x="154.9" y="436.3" width="1.15" height="1.15"/><rect x="155.0" y="434.6" width="1.15" height="1.15"/><rect x="155.8" y="434.7" width="1.15" height="1.15"/><rect x="155.8" y="435.7" width="1.15" height="1.15"/><rect x="156.5" y="433.5" width="1.15" height="1.15"/><rect x="155.9" y="435.1" width="1.15" height="1.15"/><rect x="157.1" y="435.4" width="1.15" height="1.15"/><rect x="156.9" y="433.1" width="1.15" height="1.15"/><rect x="157.2" y="434.2" width="1.15" height="1.15"/><rect x="158.0" y="435.5" width="1.15" height="1.15"/><rect x="158.5" y="435.8" width="1.15" height="1.15"/><rect x="159.8" y="434.9" width="1.15" height="1.15"/><rect x="159.1" y="434.6" width="1.15" height="1.15"/><rect x="159.4" y="435.0" width="1.15" height="1.15"/><rect x="160.3" y="434.7" width="1.15" height="1.15"/><rect x="160.3" y="435.6" width="1.15" height="1.15"/><rect x="161.3" y="434.3" width="1.15" height="1.15"/><rect x="160.8" y="434.2" width="1.15" height="1.15"/><rect x="161.2" y="433.7" width="1.15" height="1.15"/><rect x="161.6" y="434.2" width="1.15" height="1.15"/><rect x="162.5" y="433.8" width="1.15" height="1.15"/><rect x="163.0" y="434.2" width="1.15" height="1.15"/><rect x="162.8" y="433.9" width="1.15" height="1.15"/><rect x="163.1" y="434.6" width="1.15" height="1.15"/><rect x="163.7" y="432.8" width="1.15" height="1.15"/><rect x="163.7" y="434.9" width="1.15" height="1.15"/><rect x="164.6" y="435.1" width="1.15" height="1.15"/><rect x="164.3" y="435.0" width="1.15" height="1.15"/><rect x="164.8" y="435.3" width="1.15" height="1.15"/><rect x="165.2" y="433.8" width="1.15" height="1.15"/><rect x="165.6" y="433.5" width="1.15" height="1.15"/><rect x="166.4" y="433.8" width="1.15" height="1.15"/><rect x="167.0" y="434.2" width="1.15" height="1.15"/><rect x="167.3" y="434.1" width="1.15" height="1.15"/><rect x="168.4" y="434.3" width="1.15" height="1.15"/><rect x="168.7" y="435.2" width="1.15" height="1.15"/><rect x="169.5" y="434.3" width="1.15" height="1.15"/><rect x="170.0" y="434.3" width="1.15" height="1.15"/><rect x="170.4" y="433.7" width="1.15" height="1.15"/><rect x="170.7" y="436.9" width="1.15" height="1.15"/><rect x="171.3" y="436.8" width="1.15" height="1.15"/><rect x="171.2" y="432.1" width="1.15" height="1.15"/><rect x="172.1" y="436.8" width="1.15" height="1.15"/><rect x="173.3" y="434.7" width="1.15" height="1.15"/><rect x="172.6" y="434.0" width="1.15" height="1.15"/><rect x="174.1" y="434.7" width="1.15" height="1.15"/><rect x="173.7" y="435.8" width="1.15" height="1.15"/><rect x="174.4" y="435.3" width="1.15" height="1.15"/><rect x="175.6" y="435.5" width="1.15" height="1.15"/><rect x="175.8" y="435.3" width="1.15" height="1.15"/><rect x="175.8" y="434.8" width="1.15" height="1.15"/><rect x="175.8" y="435.1" width="1.15" height="1.15"/><rect x="176.5" y="435.5" width="1.15" height="1.15"/><rect x="176.7" y="434.2" width="1.15" height="1.15"/><rect x="176.9" y="434.8" width="1.15" height="1.15"/><rect x="177.3" y="433.9" width="1.15" height="1.15"/><rect x="177.8" y="434.8" width="1.15" height="1.15"/><rect x="178.4" y="435.6" width="1.15" height="1.15"/><rect x="179.6" y="435.8" width="1.15" height="1.15"/><rect x="179.0" y="434.9" width="1.15" height="1.15"/><rect x="179.5" y="434.9" width="1.15" height="1.15"/><rect x="180.0" y="434.2" width="1.15" height="1.15"/><rect x="180.1" y="433.4" width="1.15" height="1.15"/><rect x="181.0" y="435.2" width="1.15" height="1.15"/><rect x="181.0" y="436.0" width="1.15" height="1.15"/><rect x="182.0" y="434.8" width="1.15" height="1.15"/><rect x="181.8" y="434.0" width="1.15" height="1.15"/><rect x="181.5" y="434.8" width="1.15" height="1.15"/><rect x="182.6" y="435.5" width="1.15" height="1.15"/><rect x="182.2" y="435.2" width="1.15" height="1.15"/><rect x="183.4" y="434.4" width="1.15" height="1.15"/><rect x="184.1" y="432.9" width="1.15" height="1.15"/><rect x="184.5" y="435.1" width="1.15" height="1.15"/><rect x="185.3" y="434.4" width="1.15" height="1.15"/><rect x="185.0" y="435.6" width="1.15" height="1.15"/><rect x="185.4" y="437.3" width="1.15" height="1.15"/><rect x="185.5" y="435.2" width="1.15" height="1.15"/><rect x="186.3" y="432.4" width="1.15" height="1.15"/><rect x="186.9" y="435.2" width="1.15" height="1.15"/><rect x="186.3" y="434.1" width="1.15" height="1.15"/><rect x="187.4" y="434.8" width="1.15" height="1.15"/><rect x="187.3" y="435.4" width="1.15" height="1.15"/><rect x="187.1" y="435.2" width="1.15" height="1.15"/><rect x="188.5" y="434.7" width="1.15" height="1.15"/><rect x="187.9" y="435.5" width="1.15" height="1.15"/><rect x="188.9" y="436.1" width="1.15" height="1.15"/><rect x="189.1" y="435.5" width="1.15" height="1.15"/><rect x="190.2" y="433.7" width="1.15" height="1.15"/><rect x="191.0" y="434.8" width="1.15" height="1.15"/><rect x="191.6" y="434.0" width="1.15" height="1.15"/><rect x="192.5" y="434.6" width="1.15" height="1.15"/><rect x="193.4" y="434.4" width="1.15" height="1.15"/><rect x="192.9" y="433.7" width="1.15" height="1.15"/><rect x="193.5" y="434.0" width="1.15" height="1.15"/><rect x="194.3" y="433.0" width="1.15" height="1.15"/><rect x="195.0" y="434.5" width="1.15" height="1.15"/><rect x="195.1" y="435.3" width="1.15" height="1.15"/><rect x="196.3" y="434.6" width="1.15" height="1.15"/><rect x="198.3" y="434.0" width="1.15" height="1.15"/><rect x="199.9" y="434.0" width="1.15" height="1.15"/><rect x="200.8" y="434.8" width="1.15" height="1.15"/><rect x="200.6" y="433.9" width="1.15" height="1.15"/><rect x="201.8" y="434.0" width="1.15" height="1.15"/><rect x="203.7" y="435.5" width="1.15" height="1.15"/><rect x="203.8" y="434.1" width="1.15" height="1.15"/><rect x="205.0" y="434.9" width="1.15" height="1.15"/><rect x="206.7" y="433.9" width="1.15" height="1.15"/><rect x="207.2" y="434.0" width="1.15" height="1.15"/><rect x="208.4" y="435.6" width="1.15" height="1.15"/><rect x="209.2" y="433.8" width="1.15" height="1.15"/><rect x="209.0" y="433.4" width="1.15" height="1.15"/><rect x="209.6" y="434.9" width="1.15" height="1.15"/><rect x="210.9" y="434.6" width="1.15" height="1.15"/><rect x="211.4" y="433.4" width="1.15" height="1.15"/><rect x="212.3" y="434.0" width="1.15" height="1.15"/><rect x="212.6" y="434.5" width="1.15" height="1.15"/><rect x="212.8" y="435.2" width="1.15" height="1.15"/><rect x="213.2" y="434.7" width="1.15" height="1.15"/><rect x="214.4" y="435.1" width="1.15" height="1.15"/><rect x="216.3" y="434.1" width="1.15" height="1.15"/><rect x="216.5" y="435.4" width="1.15" height="1.15"/><rect x="216.9" y="434.5" width="1.15" height="1.15"/><rect x="216.8" y="434.4" width="1.15" height="1.15"/><rect x="217.5" y="433.6" width="1.15" height="1.15"/><rect x="217.4" y="435.0" width="1.15" height="1.15"/><rect x="218.5" y="434.4" width="1.15" height="1.15"/><rect x="218.2" y="434.7" width="1.15" height="1.15"/><rect x="219.6" y="434.7" width="1.15" height="1.15"/><rect x="219.5" y="434.6" width="1.15" height="1.15"/><rect x="220.5" y="434.3" width="1.15" height="1.15"/><rect x="220.5" y="434.8" width="1.15" height="1.15"/><rect x="222.3" y="434.4" width="1.15" height="1.15"/><rect x="223.7" y="435.0" width="1.15" height="1.15"/><rect x="223.5" y="433.6" width="1.15" height="1.15"/><rect x="224.0" y="435.6" width="1.15" height="1.15"/><rect x="224.6" y="435.3" width="1.15" height="1.15"/><rect x="225.7" y="434.4" width="1.15" height="1.15"/><rect x="227.5" y="433.9" width="1.15" height="1.15"/><rect x="227.3" y="435.4" width="1.15" height="1.15"/><rect x="228.4" y="434.7" width="1.15" height="1.15"/><rect x="229.3" y="434.8" width="1.15" height="1.15"/><rect x="229.6" y="434.4" width="1.15" height="1.15"/><rect x="230.6" y="435.5" width="1.15" height="1.15"/><rect x="230.8" y="434.6" width="1.15" height="1.15"/><rect x="231.2" y="433.8" width="1.15" height="1.15"/><rect x="233.2" y="435.8" width="1.15" height="1.15"/><rect x="234.0" y="434.4" width="1.15" height="1.15"/><rect x="234.7" y="434.4" width="1.15" height="1.15"/><rect x="234.5" y="434.1" width="1.15" height="1.15"/><rect x="235.7" y="435.2" width="1.15" height="1.15"/><rect x="236.2" y="434.5" width="1.15" height="1.15"/><rect x="239.2" y="436.2" width="1.15" height="1.15"/><rect x="239.6" y="433.7" width="1.15" height="1.15"/><rect x="240.1" y="434.8" width="1.15" height="1.15"/><rect x="240.5" y="434.4" width="1.15" height="1.15"/><rect x="240.7" y="435.0" width="1.15" height="1.15"/><rect x="241.1" y="433.4" width="1.15" height="1.15"/><rect x="242.1" y="435.1" width="1.15" height="1.15"/><rect x="242.9" y="434.2" width="1.15" height="1.15"/><rect x="243.2" y="435.7" width="1.15" height="1.15"/><rect x="244.0" y="435.0" width="1.15" height="1.15"/><rect x="246.2" y="435.2" width="1.15" height="1.15"/><rect x="246.8" y="435.9" width="1.15" height="1.15"/><rect x="247.5" y="434.5" width="1.15" height="1.15"/><rect x="248.1" y="434.4" width="1.15" height="1.15"/><rect x="249.0" y="434.7" width="1.15" height="1.15"/><rect x="248.7" y="434.0" width="1.15" height="1.15"/><rect x="250.0" y="434.0" width="1.15" height="1.15"/><rect x="251.2" y="434.6" width="1.15" height="1.15"/><rect x="252.4" y="433.8" width="1.15" height="1.15"/><rect x="252.3" y="434.1" width="1.15" height="1.15"/><rect x="252.9" y="433.2" width="1.15" height="1.15"/><rect x="254.0" y="433.5" width="1.15" height="1.15"/><rect x="254.5" y="435.2" width="1.15" height="1.15"/><rect x="255.7" y="433.7" width="1.15" height="1.15"/><rect x="255.1" y="435.2" width="1.15" height="1.15"/><rect x="256.6" y="433.9" width="1.15" height="1.15"/><rect x="255.8" y="435.2" width="1.15" height="1.15"/><rect x="257.0" y="435.0" width="1.15" height="1.15"/><rect x="257.8" y="432.9" width="1.15" height="1.15"/><rect x="258.6" y="433.7" width="1.15" height="1.15"/><rect x="259.2" y="433.5" width="1.15" height="1.15"/><rect x="259.6" y="434.3" width="1.15" height="1.15"/><rect x="260.1" y="433.9" width="1.15" height="1.15"/><rect x="260.1" y="435.2" width="1.15" height="1.15"/><rect x="260.9" y="434.8" width="1.15" height="1.15"/><rect x="262.0" y="434.5" width="1.15" height="1.15"/><rect x="263.6" y="435.1" width="1.15" height="1.15"/><rect x="264.4" y="435.5" width="1.15" height="1.15"/><rect x="265.0" y="435.5" width="1.15" height="1.15"/><rect x="266.1" y="434.0" width="1.15" height="1.15"/><rect x="266.1" y="435.5" width="1.15" height="1.15"/><rect x="266.9" y="434.2" width="1.15" height="1.15"/><rect x="267.2" y="434.5" width="1.15" height="1.15"/><rect x="267.3" y="434.2" width="1.15" height="1.15"/><rect x="268.4" y="435.0" width="1.15" height="1.15"/><rect x="268.9" y="434.3" width="1.15" height="1.15"/><rect x="269.7" y="435.4" width="1.15" height="1.15"/><rect x="269.4" y="435.9" width="1.15" height="1.15"/><rect x="270.8" y="434.0" width="1.15" height="1.15"/><rect x="270.7" y="435.5" width="1.15" height="1.15"/><rect x="271.8" y="435.7" width="1.15" height="1.15"/><rect x="272.0" y="434.9" width="1.15" height="1.15"/><rect x="272.7" y="434.8" width="1.15" height="1.15"/><rect x="274.8" y="435.4" width="1.15" height="1.15"/><rect x="275.6" y="434.0" width="1.15" height="1.15"/><rect x="275.6" y="434.9" width="1.15" height="1.15"/><rect x="276.2" y="434.2" width="1.15" height="1.15"/><rect x="276.0" y="435.3" width="1.15" height="1.15"/><rect x="277.0" y="434.0" width="1.15" height="1.15"/><rect x="277.8" y="435.1" width="1.15" height="1.15"/><rect x="278.2" y="435.3" width="1.15" height="1.15"/><rect x="278.7" y="435.1" width="1.15" height="1.15"/><rect x="279.3" y="433.9" width="1.15" height="1.15"/><rect x="279.1" y="432.9" width="1.15" height="1.15"/><rect x="279.8" y="435.5" width="1.15" height="1.15"/><rect x="280.5" y="433.7" width="1.15" height="1.15"/><rect x="281.0" y="433.9" width="1.15" height="1.15"/><rect x="280.6" y="433.0" width="1.15" height="1.15"/><rect x="281.7" y="434.8" width="1.15" height="1.15"/><rect x="281.8" y="435.1" width="1.15" height="1.15"/><rect x="282.4" y="434.1" width="1.15" height="1.15"/><rect x="282.6" y="433.9" width="1.15" height="1.15"/><rect x="283.7" y="434.9" width="1.15" height="1.15"/><rect x="284.6" y="434.5" width="1.15" height="1.15"/><rect x="284.9" y="435.5" width="1.15" height="1.15"/><rect x="285.1" y="434.3" width="1.15" height="1.15"/><rect x="285.4" y="435.2" width="1.15" height="1.15"/><rect x="285.8" y="434.3" width="1.15" height="1.15"/><rect x="286.2" y="433.1" width="1.15" height="1.15"/><rect x="287.6" y="433.7" width="1.15" height="1.15"/><rect x="287.7" y="433.9" width="1.15" height="1.15"/><rect x="288.3" y="433.8" width="1.15" height="1.15"/><rect x="288.3" y="433.8" width="1.15" height="1.15"/><rect x="288.7" y="433.4" width="1.15" height="1.15"/><rect x="288.7" y="434.9" width="1.15" height="1.15"/><rect x="289.7" y="435.5" width="1.15" height="1.15"/><rect x="290.1" y="434.0" width="1.15" height="1.15"/><rect x="290.5" y="434.6" width="1.15" height="1.15"/><rect x="291.5" y="435.2" width="1.15" height="1.15"/><rect x="293.2" y="435.0" width="1.15" height="1.15"/><rect x="293.8" y="434.7" width="1.15" height="1.15"/><rect x="293.9" y="435.3" width="1.15" height="1.15"/><rect x="295.9" y="434.7" width="1.15" height="1.15"/><rect x="296.6" y="434.7" width="1.15" height="1.15"/><rect x="298.2" y="434.7" width="1.15" height="1.15"/><rect x="298.8" y="434.7" width="1.15" height="1.15"/><rect x="298.4" y="434.7" width="1.15" height="1.15"/><rect x="299.6" y="435.8" width="1.15" height="1.15"/><rect x="299.9" y="435.0" width="1.15" height="1.15"/><rect x="300.2" y="433.8" width="1.15" height="1.15"/><rect x="302.0" y="433.7" width="1.15" height="1.15"/><rect x="301.9" y="434.7" width="1.15" height="1.15"/><rect x="302.4" y="434.6" width="1.15" height="1.15"/><rect x="303.0" y="435.2" width="1.15" height="1.15"/><rect x="304.2" y="433.9" width="1.15" height="1.15"/><rect x="305.1" y="434.8" width="1.15" height="1.15"/><rect x="305.7" y="433.9" width="1.15" height="1.15"/><rect x="306.4" y="434.8" width="1.15" height="1.15"/><rect x="306.2" y="433.7" width="1.15" height="1.15"/><rect x="308.6" y="434.1" width="1.15" height="1.15"/><rect x="308.5" y="435.5" width="1.15" height="1.15"/><rect x="308.9" y="433.2" width="1.15" height="1.15"/><rect x="310.1" y="435.3" width="1.15" height="1.15"/><rect x="309.4" y="434.8" width="1.15" height="1.15"/><rect x="310.7" y="434.0" width="1.15" height="1.15"/><rect x="311.6" y="436.0" width="1.15" height="1.15"/><rect x="311.7" y="435.0" width="1.15" height="1.15"/><rect x="312.3" y="435.4" width="1.15" height="1.15"/><rect x="313.8" y="433.5" width="1.15" height="1.15"/><rect x="314.4" y="434.6" width="1.15" height="1.15"/><rect x="315.4" y="432.9" width="1.15" height="1.15"/><rect x="315.6" y="434.8" width="1.15" height="1.15"/><rect x="315.9" y="435.2" width="1.15" height="1.15"/><rect x="317.3" y="434.7" width="1.15" height="1.15"/><rect x="317.3" y="435.6" width="1.15" height="1.15"/><rect x="317.6" y="434.2" width="1.15" height="1.15"/><rect x="318.5" y="434.3" width="1.15" height="1.15"/><rect x="318.6" y="433.9" width="1.15" height="1.15"/><rect x="319.8" y="434.3" width="1.15" height="1.15"/><rect x="319.9" y="433.7" width="1.15" height="1.15"/><rect x="321.0" y="433.6" width="1.15" height="1.15"/><rect x="321.8" y="436.1" width="1.15" height="1.15"/><rect x="326.8" y="434.5" width="1.15" height="1.15"/><rect x="327.8" y="434.7" width="1.15" height="1.15"/><rect x="327.2" y="433.2" width="1.15" height="1.15"/><rect x="327.8" y="434.7" width="1.15" height="1.15"/><rect x="329.0" y="434.9" width="1.15" height="1.15"/><rect x="328.7" y="436.2" width="1.15" height="1.15"/><rect x="329.5" y="434.1" width="1.15" height="1.15"/><rect x="331.5" y="433.4" width="1.15" height="1.15"/><rect x="331.9" y="433.1" width="1.15" height="1.15"/><rect x="334.9" y="434.6" width="1.15" height="1.15"/><rect x="337.2" y="435.2" width="1.15" height="1.15"/><rect x="336.6" y="433.5" width="1.15" height="1.15"/><rect x="338.2" y="433.2" width="1.15" height="1.15"/><rect x="337.9" y="434.4" width="1.15" height="1.15"/><rect x="339.2" y="434.1" width="1.15" height="1.15"/><rect x="339.9" y="434.8" width="1.15" height="1.15"/><rect x="341.6" y="435.0" width="1.15" height="1.15"/><rect x="341.6" y="435.9" width="1.15" height="1.15"/><rect x="344.7" y="434.9" width="1.15" height="1.15"/><rect x="348.3" y="434.9" width="1.15" height="1.15"/><rect x="348.6" y="434.0" width="1.15" height="1.15"/><rect x="350.5" y="434.9" width="1.15" height="1.15"/><rect x="351.7" y="434.3" width="1.15" height="1.15"/><rect x="352.5" y="434.1" width="1.15" height="1.15"/><rect x="355.0" y="434.6" width="1.15" height="1.15"/><rect x="355.2" y="435.3" width="1.15" height="1.15"/><rect x="356.0" y="434.1" width="1.15" height="1.15"/><rect x="357.3" y="436.7" width="1.15" height="1.15"/><rect x="358.1" y="434.5" width="1.15" height="1.15"/><rect x="358.2" y="434.2" width="1.15" height="1.15"/><rect x="358.8" y="436.2" width="1.15" height="1.15"/><rect x="359.4" y="435.7" width="1.15" height="1.15"/><rect x="360.5" y="434.6" width="1.15" height="1.15"/><rect x="361.2" y="434.8" width="1.15" height="1.15"/><rect x="362.3" y="434.9" width="1.15" height="1.15"/><rect x="364.4" y="434.8" width="1.15" height="1.15"/><rect x="365.5" y="435.4" width="1.15" height="1.15"/><rect x="373.7" y="435.6" width="1.15" height="1.15"/><rect x="374.1" y="435.0" width="1.15" height="1.15"/><rect x="375.7" y="435.2" width="1.15" height="1.15"/><rect x="376.5" y="434.2" width="1.15" height="1.15"/><rect x="376.6" y="434.0" width="1.15" height="1.15"/><rect x="377.8" y="435.2" width="1.15" height="1.15"/><rect x="378.5" y="435.1" width="1.15" height="1.15"/><rect x="378.8" y="433.5" width="1.15" height="1.15"/><rect x="379.8" y="435.7" width="1.15" height="1.15"/><rect x="379.4" y="435.1" width="1.15" height="1.15"/><rect x="380.6" y="434.5" width="1.15" height="1.15"/><rect x="380.7" y="434.6" width="1.15" height="1.15"/><rect x="382.0" y="434.9" width="1.15" height="1.15"/><rect x="381.6" y="434.7" width="1.15" height="1.15"/><rect x="382.8" y="434.0" width="1.15" height="1.15"/><rect x="383.6" y="434.3" width="1.15" height="1.15"/><rect x="383.4" y="434.9" width="1.15" height="1.15"/><rect x="383.9" y="434.7" width="1.15" height="1.15"/><rect x="384.7" y="433.6" width="1.15" height="1.15"/><rect x="385.5" y="433.9" width="1.15" height="1.15"/><rect x="385.7" y="435.2" width="1.15" height="1.15"/><rect x="386.6" y="433.3" width="1.15" height="1.15"/><rect x="386.8" y="433.5" width="1.15" height="1.15"/><rect x="387.3" y="435.5" width="1.15" height="1.15"/><rect x="388.5" y="435.0" width="1.15" height="1.15"/><rect x="388.5" y="433.4" width="1.15" height="1.15"/><rect x="388.8" y="436.0" width="1.15" height="1.15"/><rect x="389.7" y="434.2" width="1.15" height="1.15"/><rect x="390.2" y="434.0" width="1.15" height="1.15"/><rect x="391.6" y="434.9" width="1.15" height="1.15"/><rect x="391.6" y="435.4" width="1.15" height="1.15"/><rect x="393.6" y="434.3" width="1.15" height="1.15"/><rect x="395.2" y="435.3" width="1.15" height="1.15"/><rect x="396.6" y="434.2" width="1.15" height="1.15"/><rect x="397.1" y="434.4" width="1.15" height="1.15"/><rect x="401.8" y="434.4" width="1.15" height="1.15"/><rect x="402.4" y="434.8" width="1.15" height="1.15"/><rect x="403.2" y="434.8" width="1.15" height="1.15"/><rect x="404.3" y="435.0" width="1.15" height="1.15"/><rect x="405.8" y="433.9" width="1.15" height="1.15"/><rect x="405.8" y="433.8" width="1.15" height="1.15"/><rect x="406.4" y="434.4" width="1.15" height="1.15"/><rect x="407.3" y="434.5" width="1.15" height="1.15"/><rect x="409.0" y="434.6" width="1.15" height="1.15"/><rect x="409.5" y="434.3" width="1.15" height="1.15"/><rect x="409.5" y="435.6" width="1.15" height="1.15"/><rect x="411.6" y="434.1" width="1.15" height="1.15"/><rect x="412.6" y="435.0" width="1.15" height="1.15"/><rect x="413.9" y="434.1" width="1.15" height="1.15"/><rect x="416.4" y="435.3" width="1.15" height="1.15"/><rect x="416.4" y="434.6" width="1.15" height="1.15"/><rect x="418.2" y="433.9" width="1.15" height="1.15"/><rect x="418.6" y="434.7" width="1.15" height="1.15"/><rect x="420.4" y="433.8" width="1.15" height="1.15"/><rect x="426.4" y="433.7" width="1.15" height="1.15"/><rect x="427.3" y="434.9" width="1.15" height="1.15"/><rect x="428.2" y="435.0" width="1.15" height="1.15"/><rect x="427.9" y="434.0" width="1.15" height="1.15"/><rect x="428.7" y="433.9" width="1.15" height="1.15"/><rect x="430.9" y="434.2" width="1.15" height="1.15"/><rect x="430.5" y="435.0" width="1.15" height="1.15"/><rect x="432.3" y="434.5" width="1.15" height="1.15"/><rect x="433.4" y="434.7" width="1.15" height="1.15"/><rect x="433.0" y="433.9" width="1.15" height="1.15"/><rect x="433.9" y="434.2" width="1.15" height="1.15"/><rect x="434.7" y="435.0" width="1.15" height="1.15"/><rect x="434.5" y="434.3" width="1.15" height="1.15"/><rect x="435.5" y="434.6" width="1.15" height="1.15"/><rect x="437.7" y="433.2" width="1.15" height="1.15"/><rect x="438.3" y="433.2" width="1.15" height="1.15"/><rect x="438.9" y="433.9" width="1.15" height="1.15"/><rect x="439.7" y="436.1" width="1.15" height="1.15"/><rect x="445.0" y="435.8" width="1.15" height="1.15"/><rect x="452.0" y="433.4" width="1.15" height="1.15"/><rect x="457.5" y="435.5" width="1.15" height="1.15"/><rect x="463.0" y="434.6" width="1.15" height="1.15"/><rect x="468.0" y="435.3" width="1.15" height="1.15"/><rect x="472.5" y="435.4" width="1.15" height="1.15"/><rect x="495.5" y="434.3" width="1.15" height="1.15"/><rect x="497.5" y="434.9" width="1.15" height="1.15"/><rect x="385.0" y="435.1" width="1.15" height="1.15"/><rect x="412.0" y="435.4" width="1.15" height="1.15"/><rect x="430.0" y="434.4" width="1.15" height="1.15"/></g><g fill="#ffff66"><rect x="61.8" y="406.3" width="1.2" height="1.2"/><rect x="60.7" y="421.3" width="1.2" height="1.2"/><rect x="74.5" y="423.6" width="1.2" height="1.2"/><rect x="68.3" y="428.2" width="1.2" height="1.2"/><rect x="120.6" y="416.0" width="1.2" height="1.2"/><rect x="143.6" y="414.4" width="1.2" height="1.2"/><rect x="140.2" y="426.6" width="1.2" height="1.2"/><rect x="162.1" y="420.6" width="1.2" height="1.2"/><rect x="177.0" y="419.0" width="1.2" height="1.2"/><rect x="184.4" y="416.0" width="1.2" height="1.2"/><rect x="186.7" y="420.1" width="1.2" height="1.2"/><rect x="169.0" y="429.4" width="1.2" height="1.2"/><rect x="102.8" y="443.6" width="1.2" height="1.2"/><rect x="148.2" y="444.3" width="1.2" height="1.2"/><rect x="72.9" y="450.6" width="1.2" height="1.2"/><rect x="65.8" y="458.2" width="1.2" height="1.2"/><rect x="89.5" y="467.4" width="1.2" height="1.2"/><rect x="102.2" y="467.4" width="1.2" height="1.2"/><rect x="105.6" y="465.1" width="1.2" height="1.2"/><rect x="118.3" y="466.9" width="1.2" height="1.2"/><rect x="122.9" y="466.9" width="1.2" height="1.2"/><rect x="125.2" y="467.6" width="1.2" height="1.2"/><rect x="133.7" y="467.4" width="1.2" height="1.2"/><rect x="144.8" y="466.2" width="1.2" height="1.2"/><rect x="149.9" y="466.7" width="1.2" height="1.2"/><rect x="213.8" y="411.4" width="1.2" height="1.2"/><rect x="242.2" y="420.6" width="1.2" height="1.2"/><rect x="303.2" y="420.6" width="1.2" height="1.2"/><rect x="256.5" y="444.3" width="1.2" height="1.2"/><rect x="284.8" y="449.6" width="1.2" height="1.2"/><rect x="283.6" y="459.8" width="1.2" height="1.2"/><rect x="210.4" y="468.1" width="1.2" height="1.2"/><rect x="226.5" y="468.1" width="1.2" height="1.2"/><rect x="338.7" y="465.8" width="1.2" height="1.2"/><rect x="376.9" y="414.4" width="1.2" height="1.2"/><rect x="390.7" y="413.7" width="1.2" height="1.2"/><rect x="402.7" y="414.4" width="1.2" height="1.2"/><rect x="356.2" y="423.6" width="1.2" height="1.2"/><rect x="356.2" y="429.4" width="1.2" height="1.2"/><rect x="390.7" y="459.3" width="1.2" height="1.2"/><rect x="370.9" y="480.0" width="1.2" height="1.2"/></g></svg>
<span class="t" style="text-align:right;width:40px;left:0.5px;top:166.845px;font:10.67px/1 'Liberation Sans',sans-serif;color:#111">300</span>
<span class="t" style="text-align:right;width:40px;left:0.5px;top:235.845px;font:10.67px/1 'Liberation Sans',sans-serif;color:#111">250</span>
<span class="t" style="text-align:right;width:40px;left:0.5px;top:304.845px;font:10.67px/1 'Liberation Sans',sans-serif;color:#111">200</span>
<span class="t" style="text-align:right;width:40px;left:0.5px;top:373.845px;font:10.67px/1 'Liberation Sans',sans-serif;color:#111">150</span>
<span class="t" style="text-align:right;width:40px;left:0.5px;top:442.845px;font:10.67px/1 'Liberation Sans',sans-serif;color:#111">100</span>
<span class="t" style="text-align:right;width:40px;left:0.5px;top:511.845px;font:10.67px/1 'Liberation Sans',sans-serif;color:#111">50</span>
<span class="t" style="left:507.5px;top:166.845px;font:10.67px/1 'Liberation Sans',sans-serif;color:#111">0.60</span>
<span class="t" style="left:507.5px;top:235.845px;font:10.67px/1 'Liberation Sans',sans-serif;color:#111">0.50</span>
<span class="t" style="left:507.5px;top:304.845px;font:10.67px/1 'Liberation Sans',sans-serif;color:#111">0.40</span>
<span class="t" style="left:507.5px;top:373.845px;font:10.67px/1 'Liberation Sans',sans-serif;color:#111">0.30</span>
<span class="t" style="left:507.5px;top:442.845px;font:10.67px/1 'Liberation Sans',sans-serif;color:#111">0.20</span>
<span class="t" style="left:507.5px;top:511.845px;font:10.67px/1 'Liberation Sans',sans-serif;color:#111">0.10</span>
<span class="t" style="text-align:center;width:60px;left:15.5px;top:591.645px;font:10.67px/1 'Liberation Sans',sans-serif;color:#111">0</span>
<span class="t" style="text-align:center;width:60px;left:61.1px;top:591.645px;font:10.67px/1 'Liberation Sans',sans-serif;color:#111">24</span>
<span class="t" style="text-align:center;width:60px;left:106.7px;top:591.645px;font:10.67px/1 'Liberation Sans',sans-serif;color:#111">48</span>
<span class="t" style="text-align:center;width:60px;left:152.3px;top:591.645px;font:10.67px/1 'Liberation Sans',sans-serif;color:#111">72</span>
<span class="t" style="text-align:center;width:60px;left:197.9px;top:591.645px;font:10.67px/1 'Liberation Sans',sans-serif;color:#111">96</span>
<span class="t" style="text-align:center;width:60px;left:243.5px;top:591.645px;font:10.67px/1 'Liberation Sans',sans-serif;color:#111">120</span>
<span class="t" style="text-align:center;width:60px;left:289.1px;top:591.645px;font:10.67px/1 'Liberation Sans',sans-serif;color:#111">144</span>
<span class="t" style="text-align:center;width:60px;left:334.7px;top:591.645px;font:10.67px/1 'Liberation Sans',sans-serif;color:#111">168</span>
<span class="t" style="text-align:center;width:60px;left:380.3px;top:591.645px;font:10.67px/1 'Liberation Sans',sans-serif;color:#111">192</span>
<span class="t" style="text-align:center;width:60px;left:425.9px;top:591.645px;font:10.67px/1 'Liberation Sans',sans-serif;color:#111">216</span>
<span class="t" style="text-align:center;width:60px;left:470.9px;top:591.645px;font:10.67px/1 'Liberation Sans',sans-serif;color:#111">240gB</span>
<span class="t" style="left:45.5px;top:160.2px;font:10.3px/1 'Liberation Sans',sans-serif;color:#111">MB/s</span>
<span class="t" style="left:487.4px;top:159.8px;font:10.67px/1 'Liberation Sans',sans-serif;color:#111">ms</span>
<div class="b" style="left:547px;top:151.5px;width:86px;height:27px;background:#e1e1e1;border:1px solid #adadad"></div>
<span class="t" style="left:577.7px;top:158.5px;font:normal 12px/1 'Liberation Sans','Noto Sans CJK SC',sans-serif;color:#000;">开始</span>
<div class="b" style="left:538px;top:192px;width:118px;height:1px;background:#a0a0a0"></div>
<div class="b" style="left:538px;top:243px;width:118px;height:1px;background:#a0a0a0"></div>
<div class="b" style="left:538px;top:337px;width:118px;height:1px;background:#a0a0a0"></div>
<div class="b" style="left:538px;top:473.5px;width:118px;height:1px;background:#a0a0a0"></div>
<svg class="i" style="left:542.3px;top:202.8px" width="14" height="14" viewBox="0 0 14 14"><circle cx="7" cy="7" r="6" fill="#fff" stroke="#333" stroke-width="1"/><circle cx="7" cy="7" r="3.1" fill="#222"/></svg>
<span class="t" style="left:558.7px;top:203.5px;font:normal 12px/1 'Liberation Sans','Noto Sans CJK SC',sans-serif;color:#000;">读取</span>
<svg class="i" style="left:542.3px;top:223.4px" width="14" height="14" viewBox="0 0 14 14"><circle cx="7" cy="7" r="6" fill="#fff" stroke="#333" stroke-width="1"/></svg>
<span class="t" style="left:558.7px;top:224.2px;font:normal 12px/1 'Liberation Sans','Noto Sans CJK SC',sans-serif;color:#000;">写入</span>
<svg class="i" style="left:543px;top:256px" width="13" height="13" viewBox="0 0 13 13"><rect x=".5" y=".5" width="12" height="12" fill="#fff" stroke="#333" stroke-width="1"/></svg>
<span class="t" style="left:558.7px;top:256.3px;font:normal 12px/1 'Liberation Sans','Noto Sans CJK SC',sans-serif;color:#000;">快捷行程</span>
<div class="b" style="left:543px;top:279.5px;width:71.5px;height:25.5px;background:#fff;border:1px solid #cfcfcf"></div>
<span class="t" style="left:547px;top:284.7px;font:normal 12px/1 'Liberation Sans', sans-serif;color:#7a7a7a;letter-spacing:0px;">40</span>
<div class="b" style="left:598.5px;top:280.5px;width:15px;height:11.5px;background:#f0f0f0;border:1px solid #d4d4d4"></div>
<div class="b" style="left:598.5px;top:292.5px;width:15px;height:11.5px;background:#f0f0f0;border:1px solid #d4d4d4"></div>
<svg class="i" style="left:602.5px;top:283.5px" width="7" height="5" viewBox="0 0 7 5"><path d="M3.5 .5L6.5 4.5H.5Z" fill="#555"/></svg>
<svg class="i" style="left:602.5px;top:296px" width="7" height="5" viewBox="0 0 7 5"><path d="M3.5 4.5L6.5 .5H.5Z" fill="#555"/></svg>
<span class="t" style="left:630px;top:287.2px;font:normal 12px/1 'Liberation Sans', sans-serif;color:#111;letter-spacing:0.1px;">gB</span>
<svg class="i" style="left:543px;top:320px" width="13" height="13" viewBox="0 0 13 13"><rect x=".5" y=".5" width="12" height="12" fill="#fff" stroke="#333" stroke-width="1"/><path d="M2.8 6.6 L5.2 9.2 L10.2 3.4" stroke="#111" stroke-width="1.2" fill="none"/></svg>
<span class="t" style="left:558.7px;top:320.3px;font:normal 12px/1 'Liberation Sans','Noto Sans CJK SC',sans-serif;color:#000;">传输速率</span>
<div class="b" style="left:543.5px;top:360.5px;width:107.5px;height:19.5px;background:#000"></div>
<span class="t" style="left:543.5px;width:107.5px;text-align:center;top:362.1px;font:bold 11.6px/1 'Liberation Mono',monospace;color:#3fb4f2;letter-spacing:0;-webkit-text-stroke:.35px #3fb4f2">246.3 MB/s</span>
<span class="t" style="left:543px;top:343.6px;font:normal 12px/1 'Liberation Sans','Noto Sans CJK SC',sans-serif;color:#000;">最低</span>
<div class="b" style="left:543.5px;top:403.3px;width:107.5px;height:19.5px;background:#000"></div>
<span class="t" style="left:543.5px;width:107.5px;text-align:center;top:404.9px;font:bold 11.6px/1 'Liberation Mono',monospace;color:#3fb4f2;letter-spacing:0;-webkit-text-stroke:.35px #3fb4f2">265.4 MB/s</span>
<span class="t" style="left:543px;top:386.4px;font:normal 12px/1 'Liberation Sans','Noto Sans CJK SC',sans-serif;color:#000;">最高</span>
<div class="b" style="left:543.5px;top:443.5px;width:107.5px;height:19.5px;background:#000"></div>
<span class="t" style="left:543.5px;width:107.5px;text-align:center;top:445.1px;font:bold 11.6px/1 'Liberation Mono',monospace;color:#3fb4f2;letter-spacing:0;-webkit-text-stroke:.35px #3fb4f2">256.4 MB/s</span>
<span class="t" style="left:543px;top:426.4px;font:normal 12px/1 'Liberation Sans','Noto Sans CJK SC',sans-serif;color:#000;">平均</span>
<svg class="i" style="left:543px;top:483px" width="13" height="13" viewBox="0 0 13 13"><rect x=".5" y=".5" width="12" height="12" fill="#fff" stroke="#333" stroke-width="1"/><path d="M2.8 6.6 L5.2 9.2 L10.2 3.4" stroke="#111" stroke-width="1.2" fill="none"/></svg>
<span class="t" style="left:558.7px;top:483.3px;font:normal 12px/1 'Liberation Sans','Noto Sans CJK SC',sans-serif;color:#000;">存取时间</span>
<div class="b" style="left:543.5px;top:500.5px;width:107.5px;height:19.5px;background:#000"></div>
<span class="t" style="left:543.5px;width:107.5px;text-align:center;top:502.1px;font:bold 11.6px/1 'Liberation Mono',monospace;color:#ffff40;letter-spacing:0;-webkit-text-stroke:.35px #ffff40">0.218 ms</span>
<svg class="i" style="left:543px;top:528px" width="13" height="13" viewBox="0 0 13 13"><rect x=".5" y=".5" width="12" height="12" fill="#fff" stroke="#333" stroke-width="1"/></svg>
<span class="t" style="left:558.7px;top:528.3px;font:normal 12px/1 'Liberation Sans','Noto Sans CJK SC',sans-serif;color:#000;">突发传输速率</span>
<div class="b" style="left:543.5px;top:545px;width:107.5px;height:19.5px;background:#000"></div>
<span class="t" style="left:543.5px;width:107.5px;text-align:center;top:546.6px;font:bold 11.6px/1 'Liberation Mono',monospace;color:#fff;letter-spacing:0;-webkit-text-stroke:.35px #fff">175.8 MB/s</span>
<span class="t" style="left:543.6px;top:571.2px;font:normal 12px/1 'Liberation Sans', sans-serif;color:#111;letter-spacing:0px;">CPU</span>
<span class="t" style="left:570.2px;top:570.6px;font:normal 12px/1 'Liberation Sans','Noto Sans CJK SC',sans-serif;color:#000;">占用率</span>
<div class="b" style="left:543.5px;top:588px;width:107.5px;height:19.5px;background:#000"></div>
<svg class="i" style="left:0;top:0" width="677" height="636" viewBox="0 0 677 636">
<defs><mask id="crm" maskUnits="userSpaceOnUse" x="520" y="480" width="120" height="110"><rect x="520" y="480" width="120" height="110" fill="#fff"/><circle cx="573" cy="535.5" r="41.9" fill="#000"/></mask></defs>
<circle cx="570.4" cy="535" r="32.1" fill="#fff"/>
<clipPath id="bx"><rect x="543.5" y="500.5" width="107.5" height="19.5"/><rect x="543.5" y="545" width="107.5" height="19.5"/></clipPath>
<g clip-path="url(#bx)"><circle cx="578.4" cy="534.9" r="39.6" fill="#fff" mask="url(#crm)"/></g>
<path d="M552 545 H561.2 Q560.6 549.4 556.6 549.4 Q552.6 549.4 552 545Z" fill="#111"/>
<path d="M570.6 545 H581.4 Q579.5 549 576 549 Q572.5 549 570.6 545Z" fill="#111"/>
<path d="M553 528.5 H555.5 V540.5 H553" fill="none" stroke="#666" stroke-width="1"/>
<path d="M560 529 V540" stroke="#888" stroke-width="1" stroke-dasharray="1 1.3"/>
</svg>
<span class="t" style="left:570.7px;top:528.3px;font:normal 12px/1 'Liberation Sans','Noto Sans CJK SC',sans-serif;color:#2e2e2e;opacity:.9;">发传</span>
<span class="t" style="left:594.7px;top:528.3px;font:normal 12px/1 'Liberation Sans','Noto Sans CJK SC',sans-serif;color:#222;clip-path:inset(0 0 0 35%);">输</span>
<span class="t" style="left:519.5px;top:576.6px;font:normal 23px/1 'Liberation Sans','Noto Sans CJK SC',sans-serif;color:#fff;letter-spacing:2.2px;">科技视讯</span>
<svg class="i" style="left:548px;top:600px" width="62" height="3" viewBox="0 0 62 3"><path d="M0 1.5H62" stroke="#aaa" stroke-width="1.4" stroke-dasharray="1.2 2.6"/></svg>
<span class="t" style="left:537.2px;top:603.4px;font:500 16px/1 'Liberation Sans','Noto Sans CJK SC',sans-serif;color:#fff;letter-spacing:-1.4px;text-shadow:1px 1px 1px rgba(0,0,0,.9),0 0 1px rgba(0,0,0,.6)">头条</span>
<span class="t" style="left:575.6px;top:602.6px;font:17.5px/1 'Liberation Sans',sans-serif;color:#fff;text-shadow:1px 1px 1px rgba(0,0,0,.9),0 0 1px rgba(0,0,0,.6)">@</span>
<span class="t" style="left:594px;top:603.4px;font:500 16.6px/1 'Liberation Sans','Noto Sans CJK SC',sans-serif;color:#fff;letter-spacing:0px;text-shadow:1px 1px 1px rgba(0,0,0,.9),0 0 1px rgba(0,0,0,.6)">科技视讯</span>
<div class="b" style="left:1px;top:1px;width:2px;height:634px;background:#e9f3f9;opacity:.0"></div>
<div class="b" style="left:0px;top:0px;width:677px;height:1px;background:#1a2733"></div>
<div class="b" style="left:0px;top:0px;width:1px;height:636px;background:#21485a"></div>
<div class="b" style="left:676px;top:0px;width:1px;height:636px;background:#1a2b3c"></div>
<div class="b" style="left:0px;top:635px;width:677px;height:1px;background:#21485a"></div>
<div class="b" style="left:1px;top:633px;width:675px;height:2px;background:#e4f1f8"></div>
<div class="b" style="left:1px;top:92px;width:2px;height:542px;background:#e9f4fa"></div>
<div class="b" style="left:674px;top:92px;width:2px;height:542px;background:#e9f4fa"></div>
</div>
</body></html>
